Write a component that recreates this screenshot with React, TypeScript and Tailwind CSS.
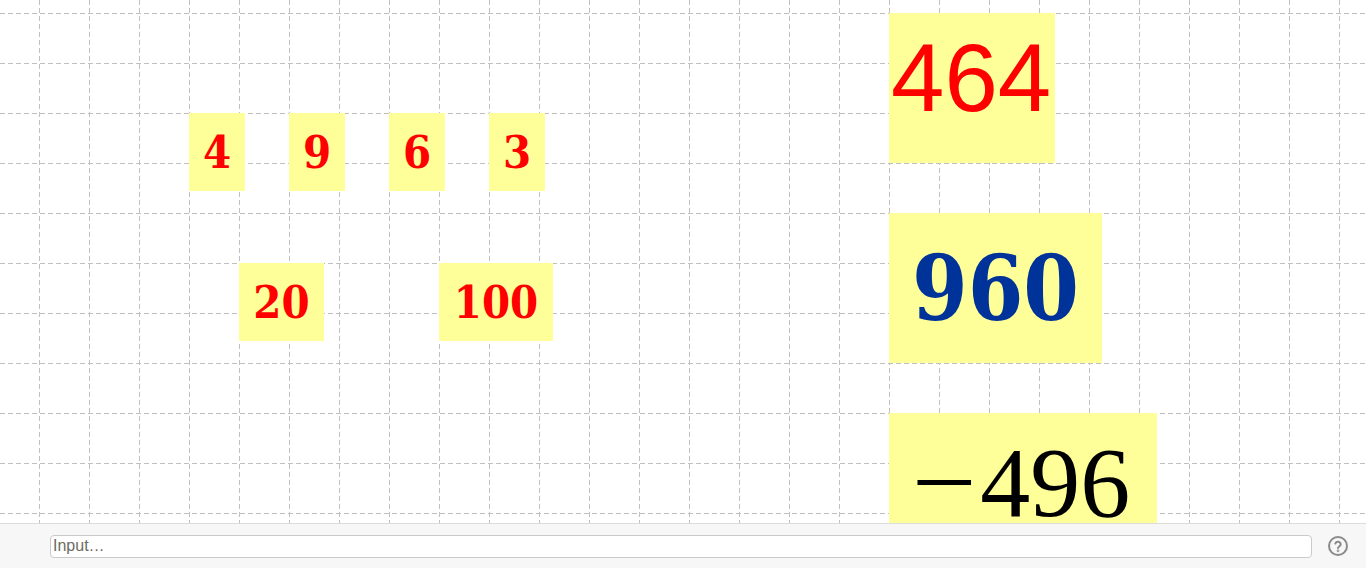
import React from "react";

const W = 1366;
const H = 523;

function Grid() {
  const xs: number[] = [];
  for (let x = 39; x < W; x += 50) xs.push(x);
  const ys: number[] = [];
  for (let y = 13; y < H; y += 50) ys.push(y);
  return (
    <svg className="absolute inset-0" width={W} height={H}>
      {xs.map((x) => (
        <line key={"v" + x} x1={x + 0.5} y1={0} x2={x + 0.5} y2={H} stroke="#c0c0c0" strokeWidth={1} strokeDasharray="5 3" />
      ))}
      {ys.map((y) => (
        <line key={"h" + y} x1={0} y1={y + 0.5} x2={W} y2={y + 0.5} stroke="#c0c0c0" strokeWidth={1} strokeDasharray="5 3" />
      ))}
    </svg>
  );
}

const boldSerif = '"DejaVu Serif Condensed", "DejaVu Serif", "Liberation Serif", serif';

function SmallBox({ left, top, width, text }: { left: number; top: number; width: number; text: string }) {
  return (
    <div
      className="absolute flex h-[78px] items-center justify-center bg-[#ffff99] text-[45px] font-bold leading-none text-[#ff0000] [font-stretch:condensed]"
      style={{ left, top, width, fontFamily: boldSerif }}
    >
      {text}
    </div>
  );
}

export default function App() {
  return (
    <div className="relative h-[568px] w-[1366px] overflow-hidden bg-white">
      <div className="relative h-[523px] w-full overflow-hidden bg-white">
        <Grid />
        <SmallBox left={189} top={113} width={56} text="4" />
        <SmallBox left={289} top={113} width={56} text="9" />
        <SmallBox left={389} top={113} width={56} text="6" />
        <SmallBox left={489} top={113} width={56} text="3" />
        <SmallBox left={239} top={263} width={85} text="20" />
        <SmallBox left={439} top={263} width={114} text="100" />

        <div
          className="absolute left-[889px] top-[13px] h-[150px] w-[166px] bg-[#ffff99] pl-[2px] pt-[17px] text-[96px] font-normal leading-none text-[#ff0000]"
          style={{ fontFamily: "Liberation Sans, Arimo, Helvetica, sans-serif" }}
        >
          464
        </div>

        <div
          className="absolute left-[889px] top-[213px] flex h-[150px] w-[213px] items-center justify-center bg-[#ffff99] text-[89px] font-bold leading-none text-[#003399] [font-stretch:condensed]"
          style={{ fontFamily: boldSerif }}
        >
          960
        </div>

        <div
          className="absolute left-[889px] top-[413px] flex h-[110px] w-[268px] justify-center bg-[#ffff99] pt-[30px] text-[100px] leading-[80px] text-black"
          style={{ fontFamily: '"Liberation Serif", "Times New Roman", serif' }}
        >
          <span className="mr-[8px] inline-block scale-x-[1.15]">−</span>
          <span>496</span>
        </div>
      </div>

      <div className="flex h-[45px] items-center border-t border-[#dcdcdc] bg-[#f7f7f7] pl-[50px] pr-[17px]">
        <div
          className="flex h-[23px] flex-1 items-center rounded-[4px] border border-[#cacaca] bg-white pl-[2px] text-[16px] text-[#6b6b5e]"
          style={{ fontFamily: "Liberation Sans, Arial, sans-serif" }}
        >
          Input…
        </div>
        <div className="ml-[15px] flex h-[22px] w-[22px] items-center justify-center">
          <svg width="22" height="22" viewBox="0 0 24 24" fill="none" stroke="#8a8a8a" strokeWidth="2.2" strokeLinecap="round" strokeLinejoin="round">
            <circle cx="12" cy="12" r="9.8" />
            <path d="M9.1 9.3a3 3 0 0 1 5.8 1c0 2-2.9 2.4-2.9 3.9" />
            <circle cx="12" cy="17.2" r="0.4" fill="#8a8a8a" />
          </svg>
        </div>
      </div>
    </div>
  );
}
